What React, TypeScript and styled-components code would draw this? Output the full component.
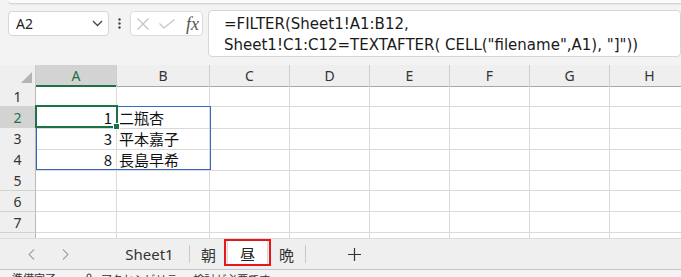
import React from "react";
import styled, { createGlobalStyle } from "styled-components";

const GlobalStyle = createGlobalStyle`
  html, body { margin: 0; padding: 0; overflow: hidden; background: #f3f3f3; }
  body { font-family: "Noto Sans", "Noto Sans CJK JP", sans-serif; }
  * { box-sizing: border-box; }
`;

const GREEN = "#1e7145";
const COLS = [36, 81, 93, 80, 80, 80, 80, 80, 80];
const LETTERS = ["A", "B", "C", "D", "E", "F", "G", "H"];
const ROW_H = 21;

const Page = styled.div`
  width: 681px;
  height: 277px;
  overflow: hidden;
  display: flex;
  flex-direction: column;
  background: #f3f3f3;
`;

const RibbonEdge = styled.div`
  flex-shrink: 0;
  height: 4px;
  margin-left: 8px;
  background: #fafafa;
  border-bottom: 1px solid #d4d4d4;
  border-bottom-left-radius: 6px;
  box-shadow: 0 1px 2px rgba(0, 0, 0, 0.06);
`;

const FormulaRow = styled.div`
  flex-shrink: 0;
  display: flex;
  align-items: flex-start;
  height: 47px;
  margin-top: 6px;
  padding-left: 8px;
`;

const NameBox = styled.div`
  width: 101px;
  height: 25px;
  margin-top: 1px;
  background: #fff;
  border: 1px solid #d6d6d6;
  border-radius: 4px;
  display: flex;
  align-items: center;
  justify-content: space-between;
  padding: 0 5px 0 7px;
  font-size: 14px;
  color: #222;
`;

const Dots = styled.div`
  width: 21px;
  height: 25px;
  margin-top: 1px;
  display: flex;
  align-items: center;
  justify-content: center;
`;

const FxBox = styled.div`
  width: 73px;
  height: 25px;
  margin-top: 1px;
  background: #fff;
  border: 1px solid #dcdcdc;
  border-radius: 4px;
  display: flex;
  align-items: center;
  padding-left: 6px;
  gap: 10px;
`;

const FxLabel = styled.span`
  font-family: "Liberation Serif", serif;
  font-style: italic;
  font-size: 18px;
  color: #555;
  margin-left: 1px;
  line-height: 1;
`;

const FormulaBox = styled.div`
  width: 473px;
  height: 47px;
  margin-left: 5px;
  background: #fff;
  border: 1px solid #d6d6d6;
  border-radius: 4px;
  padding: 3px 0 0 15px;
  font-family: "DejaVu Sans", sans-serif;
  font-size: 15px;
  line-height: 21px;
  color: #1a1a1a;
  white-space: pre;
`;

const GridArea = styled.div`
  flex-shrink: 0;
  position: relative;
  height: 173px;
  margin-top: 8px;
  overflow: hidden;
  background: #fff;
`;

const GridRow = styled.div`
  display: grid;
  grid-template-columns: ${COLS.map((c) => c + "px").join(" ")};
  height: ${ROW_H}px;
`;

const Corner = styled.div`
  background: #efefef;
  border-right: 1px solid #c9c9c9;
  border-bottom: 1px solid #a6a6a6;
  display: flex;
  align-items: flex-end;
  justify-content: flex-end;
  padding: 0 3px 3px 0;
`;

const ColHeader = styled.div<{ $sel?: boolean }>`
  background: ${(p) => (p.$sel ? "#d3d3d3" : "#efefef")};
  border-right: 1px solid #cfcfcf;
  border-bottom: ${(p) => (p.$sel ? `2px solid ${GREEN}` : "1px solid #a6a6a6")};
  color: ${(p) => (p.$sel ? GREEN : "#333")};
  font-size: 14px;
  display: flex;
  align-items: center;
  justify-content: center;
  padding-top: ${(p) => (p.$sel ? "1px" : "0")};
`;

const RowHeader = styled.div<{ $sel?: boolean }>`
  background: ${(p) => (p.$sel ? "#d3d3d3" : "#efefef")};
  border-right: 1px solid #b9b9b9;
  border-bottom: 1px solid #d2d2d2;
  color: ${(p) => (p.$sel ? GREEN : "#333")};
  font-size: 14px;
  display: flex;
  align-items: center;
  justify-content: center;
`;

const Cell = styled.div<{ $num?: boolean }>`
  border-right: 1px solid #dadada;
  border-bottom: 1px solid #dadada;
  font-family: "Noto Sans CJK JP", sans-serif;
  font-size: 15px;
  color: #111;
  display: flex;
  align-items: center;
  justify-content: ${(p) => (p.$num ? "flex-end" : "flex-start")};
  padding: ${(p) => (p.$num ? "0 4px 0 0" : "0 0 0 2px")};
  white-space: nowrap;
`;

const RangeBox = styled.div`
  position: absolute;
  border: 1px solid #3668c2;
  pointer-events: none;
`;

const SelectBox = styled.div`
  position: absolute;
  border: 2px solid ${GREEN};
  pointer-events: none;
`;

const FillHandle = styled.div`
  position: absolute;
  right: -4px;
  bottom: -4px;
  width: 7px;
  height: 7px;
  background: ${GREEN};
  border: 1px solid #fff;
`;

const TabBar = styled.div`
  flex-shrink: 0;
  height: 32px;
  background: #efefef;
  border-top: 1px solid #dcdcdc;
  border-bottom: 1px solid #c6c6c6;
  display: flex;
  align-items: stretch;
`;

const Nav = styled.div`
  width: 110px;
  display: flex;
  align-items: center;
  padding-left: 26px;
  gap: 23px;
`;

const NavArrow = styled.div`
  width: 11px;
  height: 14px;
  display: flex;
  align-items: center;
  justify-content: center;
`;

const Tab = styled.div<{ $w: number }>`
  width: ${(p) => p.$w}px;
  display: flex;
  align-items: center;
  justify-content: center;
  font-size: 15px;
  color: #333;
  font-family: "Noto Sans", "Noto Sans CJK JP", sans-serif;
`;

const Sep = styled.div`
  width: 1px;
  align-self: center;
  height: 18px;
  background: #c8c8c8;
`;

const ActiveFrame = styled.div`
  width: 47px;
  height: 27px;
  margin: 0 -3px;
  border: 2px solid #e8161a;
  background: #efefef;
  padding: 0 1px;
  position: relative;
  z-index: 1;
`;

const ActiveTab = styled.div`
  height: 100%;
  background: #fff;
  border-left: 1px solid #dadada;
  border-right: 1px solid #dadada;
  display: flex;
  flex-direction: column;
  align-items: center;
  justify-content: center;
  font-family: "Noto Sans CJK JP", sans-serif;
  font-size: 15px;
  color: #222;
  padding-top: 2px;
`;

const Underline = styled.div`
  width: 15px;
  height: 2px;
  background: ${GREEN};
  margin-top: 1px;
`;

const AddButton = styled.div`
  margin-left: 36px;
  width: 24px;
  display: flex;
  align-items: center;
  justify-content: center;
`;

const StatusBar = styled.div`
  flex-shrink: 0;
  height: 24px;
  background: #f3f3f3;
  display: flex;
  align-items: flex-start;
  padding: 3px 0 0 12px;
  font-family: "Noto Sans CJK JP", sans-serif;
  font-size: 11px;
  line-height: 1;
  color: #333;
`;

const StatusItem = styled.span<{ $ml?: number }>`
  margin-left: ${(p) => p.$ml ?? 0}px;
  display: inline-flex;
  align-items: center;
  gap: 5px;
`;

const data: Record<number, [string, string]> = {
  2: ["1", "二瓶杏"],
  3: ["3", "平本嘉子"],
  4: ["8", "長島早希"],
};

const colLeft = (i: number) => COLS.slice(0, i).reduce((a, b) => a + b, 0);

export default function App() {
  const rows = [1, 2, 3, 4, 5, 6, 7, 8];
  return (
    <Page>
      <GlobalStyle />
      <RibbonEdge />
      <FormulaRow>
        <NameBox>
          <span>A2</span>
          <svg width="11" height="7" viewBox="0 0 11 7">
            <polyline points="1,1 5.5,5.5 10,1" fill="none" stroke="#444" strokeWidth="1.3" />
          </svg>
        </NameBox>
        <Dots>
          <svg width="3" height="11" viewBox="0 0 3 11">
            <circle cx="1.5" cy="1.5" r="1.2" fill="#444" />
            <circle cx="1.5" cy="5.5" r="1.2" fill="#444" />
            <circle cx="1.5" cy="9.5" r="1.2" fill="#444" />
          </svg>
        </Dots>
        <FxBox>
          <svg width="12" height="12" viewBox="0 0 12 12">
            <path d="M0.5 0.5 L11.5 11.5 M11.5 0.5 L0.5 11.5" stroke="#c2c2c2" strokeWidth="1.1" />
          </svg>
          <svg width="16" height="10" viewBox="0 0 16 10">
            <polyline points="0.5,4.5 5,9 15.5,0.5" fill="none" stroke="#c2c2c2" strokeWidth="1.1" />
          </svg>
          <FxLabel>fx</FxLabel>
        </FxBox>
        <FormulaBox>
          {"=FILTER(Sheet1!A1:B12,\nSheet1!C1:C12=TEXTAFTER( CELL(\"filename\",A1), \"]\"))"}
        </FormulaBox>
      </FormulaRow>

      <GridArea>
        <GridRow>
          <Corner>
            <svg width="11" height="11" viewBox="0 0 11 11">
              <polygon points="11,0 11,11 0,11" fill="#b4b4b4" />
            </svg>
          </Corner>
          {LETTERS.map((l, i) => (
            <ColHeader key={l} $sel={i === 0}>
              {l}
            </ColHeader>
          ))}
        </GridRow>
        {rows.map((r) => (
          <GridRow key={r}>
            <RowHeader $sel={r === 2}>{r < 8 ? r : ""}</RowHeader>
            {LETTERS.map((l, i) => (
              <Cell key={l} $num={i === 0}>
                {data[r] && i < 2 ? data[r][i] : ""}
              </Cell>
            ))}
          </GridRow>
        ))}
        <RangeBox
          style={{
            left: colLeft(1),
            top: ROW_H * 2 - 1,
            width: COLS[1] + COLS[2] + 1,
            height: ROW_H * 3 + 1,
          }}
        />
        <SelectBox
          style={{
            left: colLeft(1) - 1,
            top: ROW_H * 2 - 2,
            width: COLS[1] + 2,
            height: ROW_H + 2,
          }}
        >
          <FillHandle />
        </SelectBox>
      </GridArea>

      <TabBar>
        <Nav>
          <NavArrow>
            <svg width="7" height="11" viewBox="0 0 7 11">
              <polyline points="6,0.5 1,5.5 6,10.5" fill="none" stroke="#a3a3a3" strokeWidth="1.1" />
            </svg>
          </NavArrow>
          <NavArrow>
            <svg width="7" height="11" viewBox="0 0 7 11">
              <polyline points="1,0.5 6,5.5 1,10.5" fill="none" stroke="#a3a3a3" strokeWidth="1.1" />
            </svg>
          </NavArrow>
        </Nav>
        <Tab $w={79}>Sheet1</Tab>
        <Sep />
        <Tab $w={37}>朝</Tab>
        <ActiveFrame>
          <ActiveTab>
            <span>昼</span>
            <Underline />
          </ActiveTab>
        </ActiveFrame>
        <Tab $w={37}>晩</Tab>
        <Sep />
        <AddButton>
          <svg width="13" height="13" viewBox="0 0 13 13">
            <path d="M6.5 0 V13 M0 6.5 H13" stroke="#333" strokeWidth="1.2" />
          </svg>
        </AddButton>
      </TabBar>

      <StatusBar>
        <StatusItem>準備完了</StatusItem>
        <StatusItem $ml={28}>
          <svg width="12" height="12" viewBox="0 0 12 12">
            <circle cx="5" cy="3" r="2" fill="none" stroke="#333" strokeWidth="1" />
            <path d="M1 6 H9 M5 6 V11" stroke="#333" strokeWidth="1" />
          </svg>
          アクセシビリティ: 検討が必要です
        </StatusItem>
      </StatusBar>
    </Page>
  );
}
